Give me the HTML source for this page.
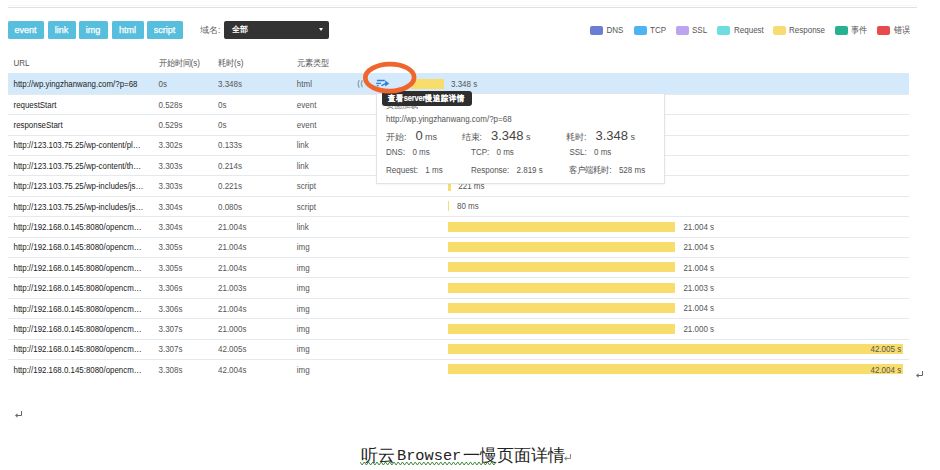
<!DOCTYPE html>
<html><head><meta charset="utf-8">
<style>
html,body{margin:0;padding:0;background:#fff;}
body{width:940px;height:470px;position:relative;overflow:hidden;font-family:"Liberation Sans",sans-serif;}
.a{position:absolute;white-space:nowrap;}
.btn{position:absolute;top:21px;height:17.7px;background:#57bedd;border-radius:1.6px;color:#fff;font-size:9px;line-height:18px;text-align:center;font-weight:normal;-webkit-text-stroke:0.25px #fff;text-indent:-0.8px;}
.sw{position:absolute;top:26px;width:13px;height:9px;border-radius:2px;}
.lg{position:absolute;top:25px;font-size:8px;line-height:11px;color:#555;transform:scaleY(1.1);transform-origin:0 50%;}
.th{position:absolute;top:58px;font-size:8px;line-height:12px;color:#555;transform:scaleY(1.1);transform-origin:0 50%;}
.row{position:absolute;left:8px;width:901px;height:20.4px;border-top:1px solid #e6e9ec;box-sizing:border-box;}
.c{position:absolute;font-size:8px;line-height:20px;color:#555;top:0.8px;white-space:nowrap;transform:scaleY(1.12);transform-origin:0 50%;}
.r1 .c{top:2.1px;}
.c1{left:5.5px;color:#222;font-size:7.9px;}
.c2{left:150.5px;}
.c3{left:210px;}
.c4{left:288.8px;}
.bar{position:absolute;height:10.1px;background:#f9dd6c;}
.bt{position:absolute;font-size:8px;line-height:11px;color:#555;white-space:nowrap;transform:scaleY(1.12);transform-origin:0 50%;}
.pl{position:absolute;font-size:8px;line-height:10px;color:#555;white-space:nowrap;transform:scaleY(1.08);transform-origin:0 50%;}
.big{position:absolute;font-size:8.5px;line-height:16px;color:#555;white-space:nowrap;}
.big b{font-weight:normal;font-size:13px;color:#444;margin-left:9.1px;}
.big i{font-style:normal;font-size:9px;}
</style></head><body>
<div class="a" style="left:8px;top:4.5px;width:909px;height:1px;background:#f8f8f8"></div>
<div class="a" style="left:8px;top:7px;width:909px;height:1px;background:#e0e0e0"></div>

<div class="btn" style="left:8px;width:36px">event</div>
<div class="btn" style="left:48px;width:28px">link</div>
<div class="btn" style="left:79px;width:29px">img</div>
<div class="btn" style="left:112px;width:32px">html</div>
<div class="btn" style="left:147px;width:36px">script</div>

<div class="a" style="left:200px;top:24.3px;font-size:8.5px;line-height:12px;color:#666">域名:</div>
<div class="a" style="left:224px;top:21px;width:105px;height:18px;background:#333;border-radius:2px"></div>
<div class="a" style="left:231.5px;top:24.3px;font-size:8px;line-height:12px;color:#fff;font-weight:bold">全部</div>
<div class="a" style="left:319.2px;top:28.4px;width:0;height:0;border-left:2.7px solid transparent;border-right:2.7px solid transparent;border-top:3px solid #fff"></div>

<div class="sw" style="left:590px;background:#6b7ed3"></div><div class="lg" style="left:606.5px">DNS</div>
<div class="sw" style="left:634px;background:#4fb3f3"></div><div class="lg" style="left:650px">TCP</div>
<div class="sw" style="left:676px;background:#bba4f0"></div><div class="lg" style="left:692px">SSL</div>
<div class="sw" style="left:717px;background:#6ddde0"></div><div class="lg" style="left:734px">Request</div>
<div class="sw" style="left:773px;background:#f8dc72"></div><div class="lg" style="left:789px">Response</div>
<div class="sw" style="left:835px;background:#26b190"></div><div class="lg" style="left:851px">事件</div>
<div class="sw" style="left:877px;background:#e84b4b"></div><div class="lg" style="left:893.5px">错误</div>

<div class="th" style="left:13.5px">URL</div>
<div class="th" style="left:158.5px">开始时间(s)</div>
<div class="th" style="left:218px">耗时(s)</div>
<div class="th" style="left:296.8px">元素类型</div>

<div class="row r1" style="top:73.1px;height:20.7px;background:#d4eafb;border-top:none">
  <div class="c c1">http://wp.yingzhanwang.com/?p=68</div><div class="c c2">0s</div><div class="c c3">3.348s</div><div class="c c4">html</div>
</div>
<div class="row" style="top:93.8px"><div class="c c1">requestStart</div><div class="c c2">0.528s</div><div class="c c3">0s</div><div class="c c4">event</div></div>
<div class="row" style="top:114.2px"><div class="c c1">responseStart</div><div class="c c2">0.529s</div><div class="c c3">0s</div><div class="c c4">event</div></div>
<div class="row" style="top:134.6px"><div class="c c1">http://123.103.75.25/wp-content/pl…</div><div class="c c2">3.302s</div><div class="c c3">0.133s</div><div class="c c4">link</div></div>
<div class="row" style="top:155.0px"><div class="c c1">http://123.103.75.25/wp-content/th…</div><div class="c c2">3.303s</div><div class="c c3">0.214s</div><div class="c c4">link</div></div>
<div class="row" style="top:175.4px"><div class="c c1">http://123.103.75.25/wp-includes/js…</div><div class="c c2">3.303s</div><div class="c c3">0.221s</div><div class="c c4">script</div></div>
<div class="row" style="top:195.8px"><div class="c c1">http://123.103.75.25/wp-includes/js…</div><div class="c c2">3.304s</div><div class="c c3">0.080s</div><div class="c c4">script</div></div>
<div class="row" style="top:216.2px"><div class="c c1">http://192.168.0.145:8080/opencm…</div><div class="c c2">3.304s</div><div class="c c3">21.004s</div><div class="c c4">link</div></div>
<div class="row" style="top:236.6px"><div class="c c1">http://192.168.0.145:8080/opencm…</div><div class="c c2">3.305s</div><div class="c c3">21.004s</div><div class="c c4">img</div></div>
<div class="row" style="top:257.0px"><div class="c c1">http://192.168.0.145:8080/opencm…</div><div class="c c2">3.305s</div><div class="c c3">21.004s</div><div class="c c4">img</div></div>
<div class="row" style="top:277.4px"><div class="c c1">http://192.168.0.145:8080/opencm…</div><div class="c c2">3.306s</div><div class="c c3">21.003s</div><div class="c c4">img</div></div>
<div class="row" style="top:297.8px"><div class="c c1">http://192.168.0.145:8080/opencm…</div><div class="c c2">3.306s</div><div class="c c3">21.004s</div><div class="c c4">img</div></div>
<div class="row" style="top:318.2px"><div class="c c1">http://192.168.0.145:8080/opencm…</div><div class="c c2">3.307s</div><div class="c c3">21.000s</div><div class="c c4">img</div></div>
<div class="row" style="top:338.6px"><div class="c c1">http://192.168.0.145:8080/opencm…</div><div class="c c2">3.307s</div><div class="c c3">42.005s</div><div class="c c4">img</div></div>
<div class="row" style="top:359.0px"><div class="c c1">http://192.168.0.145:8080/opencm…</div><div class="c c2">3.308s</div><div class="c c3">42.004s</div><div class="c c4">img</div></div>

<div class="bar" style="left:410.5px;top:78.5px;width:33.1px"></div>
<div class="bt" style="left:451px;top:79px">3.348 s</div>
<div class="bar" style="left:448px;top:181.3px;width:3px"></div>
<div class="bt" style="left:458.3px;top:180.5px">221 ms</div>
<div class="bar" style="left:448px;top:200.6px;width:1.2px"></div>
<div class="bt" style="left:457px;top:200.6px">80 ms</div>
<div class="bar" style="left:448px;top:221.6px;width:227px"></div><div class="bt" style="left:683.4px;top:221.8px">21.004 s</div>
<div class="bar" style="left:448px;top:242.0px;width:227px"></div><div class="bt" style="left:683.4px;top:242.2px">21.004 s</div>
<div class="bar" style="left:448px;top:262.4px;width:227px"></div><div class="bt" style="left:683.4px;top:262.6px">21.004 s</div>
<div class="bar" style="left:448px;top:282.8px;width:227px"></div><div class="bt" style="left:683.4px;top:283.0px">21.003 s</div>
<div class="bar" style="left:448px;top:303.2px;width:227px"></div><div class="bt" style="left:683.4px;top:303.4px">21.004 s</div>
<div class="bar" style="left:448px;top:323.6px;width:227px"></div><div class="bt" style="left:683.4px;top:323.8px">21.000 s</div>
<div class="bar" style="left:448px;top:344.0px;width:454.6px"></div><div class="bt" style="left:870.5px;top:344.2px">42.005 s</div>
<div class="bar" style="left:448px;top:364.4px;width:454.6px"></div><div class="bt" style="left:870.5px;top:364.6px">42.004 s</div>

<svg class="a" style="left:355px;top:77px" width="12" height="12" viewBox="0 0 12 12">
<path d="M4.3 3 Q2 6.7 4.3 10.6" fill="none" stroke="#8d99a6" stroke-width="1.1"/><path d="M7.4 3.4 Q5.3 6.7 7.4 10.2" fill="none" stroke="#93a6a8" stroke-width="1.4"/></svg>
<svg class="a" style="left:372px;top:76px" width="20" height="14" viewBox="0 0 20 14">
<path d="M4.9 4.5 H12.8 M4.2 7.3 H9 M4.8 9.7 H6.7" stroke="#2f7fd6" stroke-width="1.3" fill="none"/>
<path d="M9.5 9.6 L14 7.4" stroke="#2f7fd6" stroke-width="1.6" fill="none"/>
<path d="M13.2 4.6 L17.2 7.4 L13.2 10.6 Z" fill="#2f7fd6"/>
</svg>

<div class="a" style="left:376px;top:93px;width:288.5px;height:90.5px;background:#fff;border:1px solid #e3e3e3;box-sizing:border-box;box-shadow:0 1px 2px rgba(0,0,0,0.05)"></div>
<div class="pl" style="left:386px;top:101px;color:#777">页面加载</div>
<div class="pl" style="left:386px;top:115px">http://wp.yingzhanwang.com/?p=68</div>
<div class="big" style="left:386px;top:128px">开始:<b>0</b> <i>ms</i></div>
<div class="big" style="left:461.5px;top:128px">结束:<b>3.348</b> <i>s</i></div>
<div class="big" style="left:566px;top:128px">耗时:<b>3.348</b> <i>s</i></div>
<div class="pl" style="left:386px;top:147.5px">DNS:<span style="margin-left:7.3px">0 ms</span></div>
<div class="pl" style="left:471px;top:147.5px">TCP:<span style="margin-left:7.3px">0 ms</span></div>
<div class="pl" style="left:569.4px;top:147.5px">SSL:<span style="margin-left:7.3px">0 ms</span></div>
<div class="pl" style="left:386px;top:166px">Request:<span style="margin-left:7.3px">1 ms</span></div>
<div class="pl" style="left:471px;top:166px">Response:<span style="margin-left:7.3px">2.819 s</span></div>
<div class="pl" style="left:569.4px;top:166px">客户端耗时:<span style="margin-left:7.3px">528 ms</span></div>

<div class="a" style="left:381.5px;top:91.1px;width:90px;height:14.5px;background:#2e2e2e;border-radius:3px"></div>
<div class="a" style="left:388px;top:93.6px;font-size:7.5px;letter-spacing:-0.15px;line-height:10px;color:#fff;font-weight:bold;-webkit-text-stroke:0.1px #fff;transform:scaleY(1.12);transform-origin:0 50%">查看server慢追踪详情</div>

<svg class="a" style="left:355px;top:55.3px" width="70" height="45" viewBox="0 0 70 45">
<ellipse cx="34.7" cy="22.6" rx="24.4" ry="13.5" fill="none" stroke="#f0652d" stroke-width="4.7" transform="rotate(-1 34.7 22.6)"/>
</svg>

<svg class="a" style="left:14px;top:410px" width="9" height="9" viewBox="0 0 9 9"><path d="M7.5 1 V5.5 H2" stroke="#666" stroke-width="1" fill="none"/><path d="M1 5.5 L3.5 3.3 V7.7 Z" fill="#666"/></svg>
<svg class="a" style="left:915px;top:370px" width="9" height="9" viewBox="0 0 9 9"><path d="M7.5 1 V5.5 H2" stroke="#666" stroke-width="1" fill="none"/><path d="M1 5.5 L3.5 3.3 V7.7 Z" fill="#666"/></svg>

<div class="a" style="left:361px;top:445.5px;font-size:17px;line-height:20px;color:#222">听云</div>
<div class="a" style="left:397px;top:445.5px;font-size:15.3px;line-height:20px;color:#222;font-family:'Liberation Mono',monospace">Browser</div>
<div class="a" style="left:463px;top:445.5px;font-size:17px;line-height:20px;color:#222">一慢页面详情</div>
<svg class="a" style="left:562.5px;top:453px" width="9" height="9" viewBox="0 0 9 9"><path d="M7.5 1 V5.5 H2" stroke="#888" stroke-width="1" fill="none"/><path d="M1 5.5 L3.5 3.3 V7.7 Z" fill="#888"/></svg>
<svg class="a" style="left:360px;top:461px" width="137" height="5" viewBox="0 0 137 5">
<path d="M0 1 l2.125 3 l2.125 -3 l2.125 3 l2.125 -3 l2.125 3 l2.125 -3 l2.125 3 l2.125 -3 l2.125 3 l2.125 -3 l2.125 3 l2.125 -3 l2.125 3 l2.125 -3 l2.125 3 l2.125 -3 l2.125 3 l2.125 -3 l2.125 3 l2.125 -3 l2.125 3 l2.125 -3 l2.125 3 l2.125 -3 l2.125 3 l2.125 -3 l2.125 3 l2.125 -3 l2.125 3 l2.125 -3 l2.125 3 l2.125 -3 l2.125 3 l2.125 -3 l2.125 3 l2.125 -3 l2.125 3 l2.125 -3 l2.125 3 l2.125 -3 l2.125 3 l2.125 -3 l2.125 3 l2.125 -3 l2.125 3 l2.125 -3 l2.125 3 l2.125 -3 l2.125 3 l2.125 -3 l2.125 3 l2.125 -3 l2.125 3 l2.125 -3 l2.125 3 l2.125 -3 l2.125 3 l2.125 -3 l2.125 3 l2.125 -3 l2.125 3 l2.125 -3 l2.125 3 l2.125 -3" stroke="#2f7a2f" stroke-width="0.9" fill="none"/></svg>
</body></html>
